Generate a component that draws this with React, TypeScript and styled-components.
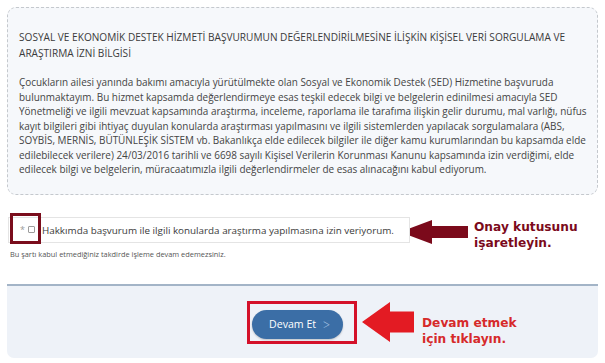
import React from "react";
import styled, { createGlobalStyle } from "styled-components";

const Global = createGlobalStyle`
  html, body { margin: 0; padding: 0; background: #ffffff; }
  body { font-family: "Open Sans", "Noto Sans", sans-serif; color: #3a3a3a; }
  * { box-sizing: border-box; }
`;

const Page = styled.div`
  width: 605px;
  height: 363px;
  padding: 7px 7px 5px 7px;
  display: flex;
  flex-direction: column;
  overflow: hidden;
`;

const InfoBox = styled.section`
  border: 1px dashed #c4c8cd;
  border-radius: 9px;
  background: #f6f8fb;
  padding: 21px 6px 17px 11px;
`;

const Title = styled.h2`
  margin: 0 0 14px;
  font-size: 10.1px;
  font-weight: 500;
  line-height: 16px;
  color: #3b3b3b;
  white-space: nowrap;
`;

const Para = styled.p`
  margin: 0;
  font-size: 9.95px;
  line-height: 14.5px;
  color: #444;
  white-space: nowrap;
`;

const ConsentRow = styled.div`
  margin-top: 22px;
  display: flex;
  align-items: flex-start;
  padding-left: 1px;
`;

const ConsentColumn = styled.div`
  display: flex;
  flex-direction: column;
`;

const ConsentField = styled.label`
  position: relative;
  width: 402px;
  height: 26px;
  border: 1px solid #e4e4e4;
  background: #fff;
  display: flex;
  align-items: center;
  padding-left: 11px;
  gap: 3px;
  font-size: 9.85px;
  color: #3a3a3a;
  white-space: nowrap;
`;

const Star = styled.span`
  color: #9a9a9a;
  font-size: 9px;
`;

const Box = styled.span`
  width: 7px;
  height: 7px;
  border: 1px solid #9c9c9c;
  border-radius: 1px;
  background: #fff;
  margin-right: 4px;
`;

const Highlight = styled.span<{ $color: string }>`
  position: absolute;
  border: 3px solid ${(p) => p.$color};
  pointer-events: none;
`;

const Callout = styled.div<{ $gap: number }>`
  display: flex;
  align-items: flex-start;
  gap: ${(p) => p.$gap}px;
`;

const CalloutText = styled.div<{ $color: string; $offset: number }>`
  margin-top: ${(p) => p.$offset}px;
  font-family: "DejaVu Sans", Verdana, sans-serif;
  font-weight: bold;
  font-size: 12.2px;
  line-height: 16.5px;
  color: ${(p) => p.$color};
  white-space: nowrap;
`;

const Note = styled.div`
  margin: 6px 0 0 2px;
  font-size: 7.4px;
  line-height: 10px;
  color: #555;
`;

const Footer = styled.footer`
  margin-top: 25px;
  flex: 1;
  border-top: 2px solid #a3b4c7;
  border-radius: 0 0 7px 7px;
  background: #eef2f8;
  display: flex;
  align-items: flex-start;
  padding: 16px 0 0 245px;
`;

const ButtonWrap = styled.div`
  position: relative;
  margin-top: 8px;
`;

const Button = styled.button`
  width: 91px;
  height: 29px;
  border: none;
  border-radius: 15px;
  background: #3b6ea6;
  color: #fff;
  font-family: "Open Sans", sans-serif;
  font-size: 10.6px;
  font-weight: 500;
  display: flex;
  align-items: center;
  justify-content: center;
  gap: 7px;
  padding: 0 0 0 4px;
  box-shadow: 0 1px 2px rgba(0, 0, 0, 0.2);
`;

const Chevron = styled.span`
  color: #a6c4e4;
  font-weight: 300;
  font-size: 12px;
  transform: scaleY(1.2);
`;

const Arrow = ({ color, w, h, head, shaft }: { color: string; w: number; h: number; head: number; shaft: number }) => {
  const mid = h / 2;
  const s = shaft / 2;
  return (
    <svg width={w} height={h} viewBox={`0 0 ${w} ${h}`} style={{ flexShrink: 0 }}>
      <polygon
        points={`0,${mid} ${head},0 ${head},${mid - s} ${w},${mid - s} ${w},${mid + s} ${head},${mid + s} ${head},${h}`}
        fill={color}
      />
    </svg>
  );
};

export default function App() {
  return (
    <>
      <Global />
      <Page>
        <InfoBox>
          <Title>
            SOSYAL VE EKONOMİK DESTEK HİZMETİ BAŞVURUMUN DEĞERLENDİRİLMESİNE İLİŞKİN KİŞİSEL VERİ SORGULAMA VE
            <br />
            ARAŞTIRMA İZNİ BİLGİSİ
          </Title>
          <Para>
            Çocukların ailesi yanında bakımı amacıyla yürütülmekte olan Sosyal ve Ekonomik Destek (SED) Hizmetine başvuruda
            <br />
            bulunmaktayım. Bu hizmet kapsamda değerlendirmeye esas teşkil edecek bilgi ve belgelerin edinilmesi amacıyla SED
            <br />
            Yönetmeliği ve ilgili mevzuat kapsamında araştırma, inceleme, raporlama ile tarafıma ilişkin gelir durumu, mal varlığı, nüfus
            <br />
            kayıt bilgileri gibi ihtiyaç duyulan konularda araştırması yapılmasını ve ilgili sistemlerden yapılacak sorgulamalara (ABS,
            <br />
            SOYBİS, MERNİS, BÜTÜNLEŞİK SİSTEM vb. Bakanlıkça elde edilecek bilgiler ile diğer kamu kurumlarından bu kapsamda elde
            <br />
            edilebilecek verilere) 24/03/2016 tarihli ve 6698 sayılı Kişisel Verilerin Korunması Kanunu kapsamında izin verdiğimi, elde
            <br />
            edilecek bilgi ve belgelerin, müracaatımızla ilgili değerlendirmeler de esas alınacağını kabul ediyorum.
          </Para>
        </InfoBox>

        <ConsentRow>
          <ConsentColumn>
            <ConsentField>
              <Star>*</Star>
              <Box />
              Hakkımda başvurum ile ilgili konularda araştırma yapılmasına izin veriyorum.
              <Highlight $color="#7a0d1c" style={{ left: 1, top: -5, width: 31, height: 31 }} />
            </ConsentField>
            <Note>Bu şartı kabul etmediğiniz takdirde işleme devam edemezsiniz.</Note>
          </ConsentColumn>
          <Callout $gap={6} style={{ marginLeft: -10, marginTop: 3 }}>
            <Arrow color="#7b0a1b" w={68} h={24} head={32} shaft={12} />
            <CalloutText $color="#7b0a1b" $offset={-1}>
              Onay kutusunu
              <br />
              işaretleyin.
            </CalloutText>
          </Callout>
        </ConsentRow>

        <Footer>
          <ButtonWrap>
            <Button>
              Devam Et <Chevron>&gt;</Chevron>
            </Button>
            <Highlight $color="#d4112a" style={{ left: -5, top: -9, right: -14, bottom: -5 }} />
          </ButtonWrap>
          <Callout $gap={8} style={{ marginLeft: 19 }}>
            <Arrow color="#e31b23" w={52} h={40} head={28} shaft={21} />
            <CalloutText $color="#d62a2a" $offset={13}>
              Devam etmek
              <br />
              için tıklayın.
            </CalloutText>
          </Callout>
        </Footer>
      </Page>
    </>
  );
}
